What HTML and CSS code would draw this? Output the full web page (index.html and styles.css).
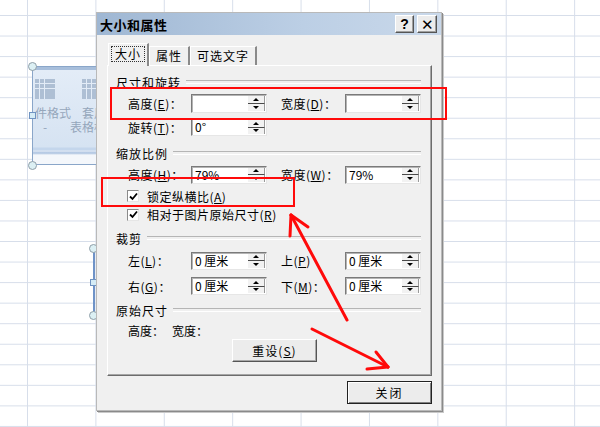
FILE: index.html
```html
<!DOCTYPE html>
<html lang="zh-CN">
<head>
  <meta charset="UTF-8" />
  <title>大小和属性</title>
  <link rel="stylesheet" href="styles.css">
</head>
<body>
  <div class="sheet">
    <!-- selected picture behind the dialog -->
    <div class="pic">
      <div class="pic-items">
        <div class="pic-item">
          <span class="pic-icon"></span>
          <span>件格式</span>
          <span class="dash">-</span>
        </div>
        <div class="pic-item second">
          <span class="pic-icon"></span>
          <span>套用</span>
          <span class="shift">表格格</span>
        </div>
      </div>
    </div>
    <span class="handle round h1"></span>
    <span class="handle square h2"></span>
    <span class="handle round h3"></span>

    <div class="vline"></div>
    <span class="handle round h4"></span>
    <span class="handle square h5"></span>
    <span class="handle round h6"></span>

    <!-- dialog -->
    <div class="dialog">
      <div class="titlebar">
        <span class="title">大小和属性</span>
        <div class="tb-btns">
          <span class="tb-btn">?</span>
          <span class="tb-btn close">✕</span>
        </div>
      </div>
      <div class="dlg-body">
        <div class="tabs">
          <div class="tab active"><span class="focus">大小</span></div>
          <div class="tab">属性</div>
          <div class="tab">可选文字</div>
        </div>
        <div class="panel">
          <div class="group-title g1"><span>尺寸和旋转</span></div>
          <div class="row r-size">
            <label class="lbl">高度(<u>E</u>)：</label>
            <div class="spin tall"><span class="val"></span><span class="btns"><i class="up"></i><i class="dn"></i></span></div>
            <label class="lbl lbl2">宽度(<u>D</u>)：</label>
            <div class="spin tall"><span class="val"></span><span class="btns"><i class="up"></i><i class="dn"></i></span></div>
          </div>
          <div class="row r-rot">
            <label class="lbl">旋转(<u>T</u>)：</label>
            <div class="spin"><span class="val">0°</span><span class="btns"><i class="up"></i><i class="dn"></i></span></div>
          </div>

          <div class="group-title g2"><span>缩放比例</span></div>
          <div class="row r-scale">
            <label class="lbl">高度(<u>H</u>)：</label>
            <div class="spin"><span class="val">79%</span><span class="btns"><i class="up"></i><i class="dn"></i></span></div>
            <label class="lbl lbl2">宽度(<u>W</u>)：</label>
            <div class="spin"><span class="val">79%</span><span class="btns"><i class="up"></i><i class="dn"></i></span></div>
          </div>
          <div class="row check c1">
            <span class="box"><svg width="9" height="9" viewBox="0 0 9 9"><polyline points="1,4.5 3.5,7 8,1.5" fill="none" stroke="#000" stroke-width="1.8"/></svg></span>
            <span>锁定纵横比(<u>A</u>)</span>
          </div>
          <div class="row check c2">
            <span class="box"><svg width="9" height="9" viewBox="0 0 9 9"><polyline points="1,4.5 3.5,7 8,1.5" fill="none" stroke="#000" stroke-width="1.8"/></svg></span>
            <span>相对于图片原始尺寸(<u>R</u>)</span>
          </div>

          <div class="group-title g3"><span>裁剪</span></div>
          <div class="row r-crop1">
            <label class="lbl">左(<u>L</u>)：</label>
            <div class="spin"><span class="val">0 厘米</span><span class="btns"><i class="up"></i><i class="dn"></i></span></div>
            <label class="lbl lbl2">上(<u>P</u>)</label>
            <div class="spin"><span class="val">0 厘米</span><span class="btns"><i class="up"></i><i class="dn"></i></span></div>
          </div>
          <div class="row r-crop2">
            <label class="lbl">右(<u>G</u>)：</label>
            <div class="spin"><span class="val">0 厘米</span><span class="btns"><i class="up"></i><i class="dn"></i></span></div>
            <label class="lbl lbl2">下(<u>M</u>)：</label>
            <div class="spin"><span class="val">0 厘米</span><span class="btns"><i class="up"></i><i class="dn"></i></span></div>
          </div>

          <div class="group-title g4"><span>原始尺寸</span></div>
          <div class="row r-orig">
            <span>高度：</span>
            <span>宽度：</span>
          </div>
          <div class="row r-reset">
            <span class="btn reset">重设(<u>S</u>)</span>
          </div>
        </div>
        <div class="footer">
          <span class="btn default">关闭</span>
        </div>
      </div>
    </div>

    <!-- red annotations -->
    <div class="mark m1"></div>
    <div class="mark m2"></div>
    <svg class="arrows" width="600" height="427" viewBox="0 0 600 427">
      <g stroke="#ff0a0a" stroke-width="3" stroke-linecap="round" fill="none">
        <line x1="347" y1="320" x2="291" y2="215"/>
        <line x1="291" y1="215" x2="290" y2="236"/>
        <line x1="291" y1="215" x2="308" y2="227"/>
        <line x1="312" y1="329" x2="388" y2="367"/>
        <line x1="388" y1="367" x2="376" y2="352"/>
        <line x1="388" y1="367" x2="367" y2="369"/>
      </g>
    </svg>
  </div>
</body>
</html>
```

FILE: styles.css
```css
* {
  margin: 0;
  padding: 0;
  box-sizing: border-box;
}
body {
  width: 600px;
  height: 427px;
  overflow: hidden;
  background: #fff;
  font-family: "Noto Sans CJK SC", "Liberation Sans", sans-serif;
  font-size: 12px;
  color: #000;
}
u {
  text-decoration: underline;
  text-underline-offset: 1px;
}

/* spreadsheet grid */
.sheet {
  position: relative;
  width: 600px;
  height: 427px;
  background-color: #fff;
  background-image:
    linear-gradient(to right, #d7deea 1px, transparent 1px),
    linear-gradient(to bottom, #d7deea 1px, transparent 1px);
  background-size: 68.4px 100%, 100% 20.55px;
  background-position: 27px 0, 0 15px;
}

/* picture object on the sheet */
.pic {
  position: absolute;
  left: 32px;
  top: 66px;
  width: 80px;
  height: 99px;
  overflow: hidden;
  border: 1px solid #8aa6c9;
  background: linear-gradient(to bottom,
    #a7bedb 0, #a7bedb 3px,
    #e3ecf7 3px, #d6e3f2 80px,
    #c4d6ec 81px, #c4d6ec 83px,
    #dfe8f4 84px, #a9c1df 86px,
    #f4f7fb 88px, #f4f7fb 100%);
}
.pic-items {
  display: flex;
  padding: 12px 0 0 2px;
}
.pic-item {
  display: flex;
  flex-direction: column;
  align-items: flex-start;
  flex-shrink: 0;
  width: 47px;
  color: #95a6bb;
  line-height: 14px;
  white-space: nowrap;
}
.pic-item .dash {
  padding-left: 8px;
}
.pic-item .shift {
  margin-left: -12px;
}
.pic-icon {
  width: 20px;
  height: 20px;
  margin-bottom: 7px;
  background:
    linear-gradient(to right, transparent 4px, #e3ecf7 4px, #e3ecf7 5px, transparent 5px, transparent 9px, #e3ecf7 9px, #e3ecf7 10px, transparent 10px),
    linear-gradient(to bottom, transparent 4px, #e3ecf7 4px, #e3ecf7 5px, transparent 5px, transparent 9px, #e3ecf7 9px, #e3ecf7 10px, transparent 10px),
    #aebfd4;
}
.handle {
  position: absolute;
  background: #dcf0f4;
  border: 1px solid #8f9ea8;
}
.handle.round {
  width: 9px;
  height: 9px;
  border-radius: 50%;
}
.handle.square {
  width: 7px;
  height: 7px;
  background: #d5ecf6;
  border-color: #6f93c2;
}
.h1 { left: 28px; top: 62px; }
.h2 { left: 29px; top: 112px; }
.h3 { left: 28px; top: 161px; }
.h4 { left: 89px; top: 244px; }
.h5 { left: 90px; top: 279px; }
.h6 { left: 89px; top: 311px; }
.vline {
  position: absolute;
  left: 93px;
  top: 248px;
  width: 2px;
  height: 67px;
  background: #6f93c8;
}

/* dialog window */
.dialog {
  position: absolute;
  left: 96px;
  top: 12px;
  width: 346px;
  height: 399px;
  background: #f0f0f0;
  border: 1px solid #b9b9b9;
  box-shadow: 1px 1px 0 #8a8a8a, 2px 2px 0 #c9c9c9;
}
.titlebar {
  display: flex;
  align-items: center;
  justify-content: space-between;
  height: 22px;
  padding: 0 4px 0 3px;
  background: linear-gradient(to right, #9fb7d3, #bccfe5 60%, #c9d8ea);
}
.title {
  font-weight: bold;
  font-size: 13px;
  letter-spacing: 0.5px;
}
.tb-btns {
  display: flex;
  gap: 3px;
}
.tb-btn {
  display: flex;
  align-items: center;
  justify-content: center;
  width: 19px;
  height: 18px;
  background: #ececec;
  border: 1px solid;
  border-color: #fff #555 #555 #fff;
  box-shadow: inset -1px -1px 0 #a0a0a0;
  font-family: "Liberation Sans", sans-serif;
  font-weight: bold;
  font-size: 14px;
  line-height: 1;
}
.tb-btn.close {
  width: 20px;
  font-weight: normal;
  font-size: 15px;
}

.dlg-body {
  padding: 8px 9px 0 10px;
}
.tabs {
  display: flex;
  align-items: flex-end;
  height: 22px;
  padding-left: 1px;
}
.tab {
  height: 19px;
  padding: 0 6px;
  line-height: 18px;
  background: #f0f0f0;
  border-top: 1px solid #fff;
  border-left: 1px solid #fff;
  border-right: 2px solid #8a8a8a;
  letter-spacing: 1px;
}
.tab.active {
  position: relative;
  z-index: 1;
  height: 23px;
  margin-bottom: -1px;
  padding: 2px 2px 0 2px;
}
.focus {
  display: block;
  padding: 0 3px;
  line-height: 14px;
  border: 1px dotted #333;
}
.panel {
  height: 311px;
  padding: 7px 10px 0 8px;
  border: 1px solid;
  border-color: #fff #6c6c6c #6c6c6c #fff;
  box-shadow: inset -1px -1px 0 #a6a6a6;
}
.group-title {
  display: flex;
  align-items: center;
  height: 18px;
  gap: 5px;
  letter-spacing: 1px;
}
.group-title::after {
  content: "";
  flex: 1;
  height: 2px;
  border-top: 1px solid #b5b5b5;
  border-bottom: 1px solid #fff;
}
.g2 { margin-top: 5px; }
.g3 { margin-top: 5px; }
.g4 { margin-top: 3px; }

.row {
  display: flex;
  align-items: center;
  padding-left: 12px;
  height: 24px;
}
.r-scale { height: 25px; }
.r-crop1 { height: 27px; }
.lbl {
  width: 63px;
  letter-spacing: 0.5px;
}
.lbl2 {
  width: 64px;
  margin-left: 14px;
}

/* spin box */
.spin {
  display: flex;
  width: 76px;
  height: 18px;
  background: #fff;
  border: 1px solid;
  border-color: #7a7a7a #e6e6e6 #e6e6e6 #7a7a7a;
  box-shadow: inset 1px 1px 0 #b4b4b4;
}
.spin.tall { height: 19px; }
.val {
  flex: 1;
  padding-left: 3px;
  line-height: 16px;
  font-size: 12px;
}
.btns {
  display: flex;
  flex-direction: column;
  width: 18px;
  padding: 1px 1px 1px 0;
}
.btns i {
  flex: 1;
  display: flex;
  align-items: center;
  justify-content: center;
  background: #f2f2f2;
  border-right: 1px solid #9a9a9a;
}
.btns i.up { border-bottom: 1px solid #4a4a4a; }
.btns i.up::before,
.btns i.dn::before {
  content: "";
  border-left: 3px solid transparent;
  border-right: 3px solid transparent;
}
.btns i.up::before { border-bottom: 3px solid #000; }
.btns i.dn::before { border-top: 3px solid #000; }

/* checkboxes */
.check {
  height: 18px;
  padding-left: 11px;
  gap: 8px;
  letter-spacing: 0.5px;
}
.c2 { height: 19px; }
.box {
  display: flex;
  align-items: center;
  justify-content: center;
  width: 12px;
  height: 12px;
  background: #fff;
  border: 1px solid;
  border-color: #8a8a8a #e6e6e6 #e6e6e6 #8a8a8a;
}

.r-orig {
  height: 18px;
  margin-top: 2px;
  gap: 8px;
}
.r-reset {
  height: 23px;
  padding-left: 116px;
}
.btn {
  display: flex;
  align-items: center;
  justify-content: center;
  width: 85px;
  height: 23px;
  background: #ececec;
  border: 1px solid;
  border-color: #fff #555 #555 #fff;
  box-shadow: inset -1px -1px 0 #a8a8a8;
  letter-spacing: 1px;
}
.footer {
  display: flex;
  justify-content: flex-end;
  padding-top: 5px;
}
.btn.default {
  border: 1px solid #222;
  box-shadow: inset 1px 1px 0 #fff, inset -1px -1px 0 #808080;
  letter-spacing: 2px;
}

/* red annotations */
.mark {
  position: absolute;
  border: 2px solid #ff0a0a;
}
.m1 {
  left: 110px;
  top: 87px;
  width: 337px;
  height: 33px;
}
.m2 {
  left: 101px;
  top: 177px;
  width: 194px;
  height: 30px;
}
.arrows {
  position: absolute;
  left: 0;
  top: 0;
  pointer-events: none;
}
```
